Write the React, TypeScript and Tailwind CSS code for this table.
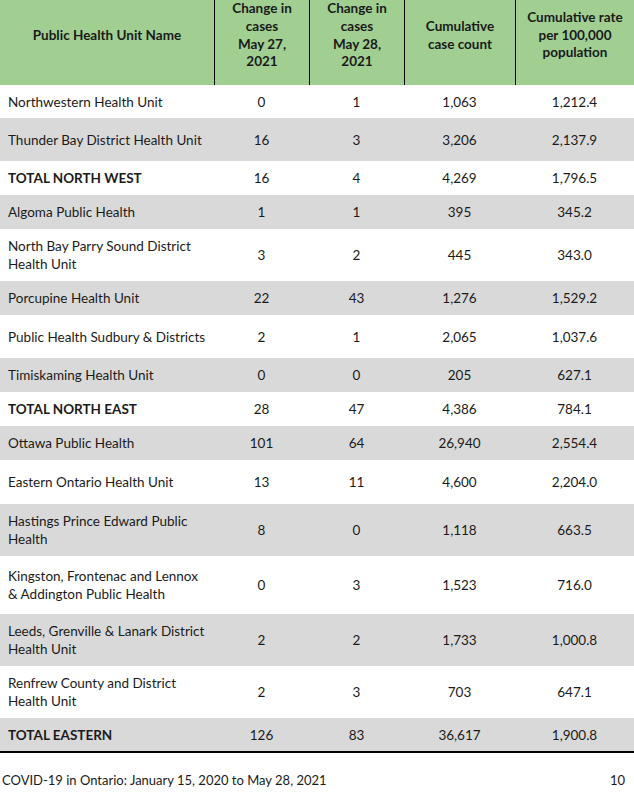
import React from "react";

type Row = {
  name: React.ReactNode;
  a: string;
  b: string;
  c: string;
  d: string;
  h: string;
  bold?: boolean;
};

const rows: Row[] = [
  { name: "Northwestern Health Unit", a: "0", b: "1", c: "1,063", d: "1,212.4", h: "h-[33px]" },
  { name: "Thunder Bay District Health Unit", a: "16", b: "3", c: "3,206", d: "2,137.9", h: "h-[43px]" },
  { name: "TOTAL NORTH WEST", a: "16", b: "4", c: "4,269", d: "1,796.5", h: "h-[34px]", bold: true },
  { name: "Algoma Public Health", a: "1", b: "1", c: "395", d: "345.2", h: "h-[34px]" },
  { name: <>North Bay Parry Sound District<br />Health Unit</>, a: "3", b: "2", c: "445", d: "343.0", h: "h-[52px]" },
  { name: "Porcupine Health Unit", a: "22", b: "43", c: "1,276", d: "1,529.2", h: "h-[34px]" },
  { name: "Public Health Sudbury & Districts", a: "2", b: "1", c: "2,065", d: "1,037.6", h: "h-[43px]" },
  { name: "Timiskaming Health Unit", a: "0", b: "0", c: "205", d: "627.1", h: "h-[34px]" },
  { name: "TOTAL NORTH EAST", a: "28", b: "47", c: "4,386", d: "784.1", h: "h-[34px]", bold: true },
  { name: "Ottawa Public Health", a: "101", b: "64", c: "26,940", d: "2,554.4", h: "h-[34px]" },
  { name: "Eastern Ontario Health Unit", a: "13", b: "11", c: "4,600", d: "2,204.0", h: "h-[44px]" },
  { name: <>Hastings Prince Edward Public<br />Health</>, a: "8", b: "0", c: "1,118", d: "663.5", h: "h-[52px]" },
  { name: <>Kingston, Frontenac and Lennox<br />&amp; Addington Public Health</>, a: "0", b: "3", c: "1,523", d: "716.0", h: "h-[58px]" },
  { name: <>Leeds, Grenville &amp; Lanark District<br />Health Unit</>, a: "2", b: "2", c: "1,733", d: "1,000.8", h: "h-[52px]" },
  { name: <>Renfrew County and District<br />Health Unit</>, a: "2", b: "3", c: "703", d: "647.1", h: "h-[52px]" },
  { name: "TOTAL EASTERN", a: "126", b: "83", c: "36,617", d: "1,900.8", h: "h-[33px]", bold: true },
];

const grid = "grid grid-cols-[214px_95px_95px_111px_119px]";

export default function App() {
  return (
    <div
      className="w-[634px] h-[808px] bg-white text-[#1b1b1b] overflow-hidden"
      style={{ fontFamily: "Lato, 'Open Sans', sans-serif" }}
    >
      {/* header */}
      <div className={`${grid} h-[85px] bg-[#a0cf91] font-bold text-[13.5px] leading-[17.7px] text-center text-[#1a1a1a]`}>
        <div className="flex items-center justify-center pb-[14px]">Public Health Unit Name</div>
        <div className="flex items-center justify-center pb-[14px] border-l border-black">
          <span>Change in<br />cases<br />May 27,<br />2021</span>
        </div>
        <div className="flex items-center justify-center pb-[14px] border-l border-black">
          <span>Change in<br />cases<br />May 28,<br />2021</span>
        </div>
        <div className="flex items-center justify-center pb-[14px] border-l border-black">
          <span>Cumulative<br />case count</span>
        </div>
        <div className="flex items-center justify-center pb-[14px] border-l border-black">
          <span>Cumulative rate<br />per 100,000<br />population</span>
        </div>
      </div>

      {/* body */}
      <div className="text-[13.5px] leading-[18px]">
        {rows.map((r, i) => (
          <div
            key={i}
            className={`${grid} ${r.h} ${i % 2 === 1 ? "bg-[#d9d9d9]" : "bg-white"}`}
          >
            <div className={`flex items-center pl-[8px] ${r.bold ? "font-bold" : ""}`}>
              <span>{r.name}</span>
            </div>
            <div className="flex items-center justify-center">{r.a}</div>
            <div className="flex items-center justify-center">{r.b}</div>
            <div className="flex items-center justify-center">{r.c}</div>
            <div className="flex items-center justify-center">{r.d}</div>
          </div>
        ))}
      </div>

      <div className="h-[2px] bg-black" />

      {/* footer */}
      <div className="h-[55px] flex items-center justify-between pl-[2px] pr-[9px] text-[13px]">
        <span>COVID-19 in Ontario: January 15, 2020 to May 28, 2021</span>
        <span>10</span>
      </div>
    </div>
  );
}
